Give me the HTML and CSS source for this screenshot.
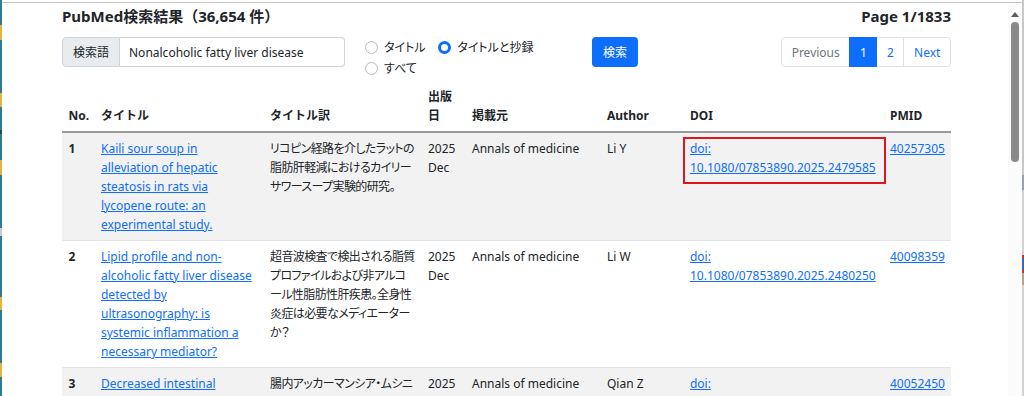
FILE: index.html
```html
<!DOCTYPE html>
<html lang="ja">
<head>
<meta charset="utf-8">
<title>PubMed検索結果</title>
<link rel="stylesheet" href="styles.css">
</head>
<body>
<div class="window">
  <div class="edge-left"></div>
  <div class="screen">
    <div class="topline"></div>
    <div class="viewport">
      <main class="page">
        <div class="head">
          <h1 class="title">PubMed検索結果（36,654 件）</h1>
          <div class="pageinfo">Page 1/1833</div>
        </div>
        <div class="toolbar">
          <form class="search">
            <div class="input-group">
              <span class="addon">検索語</span>
              <input class="field" type="text" value="Nonalcoholic fatty liver disease">
            </div>
            <div class="radios">
              <label class="check"><span class="radio"></span>タイトル</label>
              <label class="check"><span class="radio on"></span>タイトルと抄録</label>
              <label class="check all"><span class="radio"></span>すべて</label>
            </div>
            <button class="btn" type="button">検索</button>
          </form>
          <nav class="pager">
            <a class="disabled">Previous</a>
            <a class="active">1</a>
            <a>2</a>
            <a>Next</a>
          </nav>
        </div>
        <table class="results">
          <colgroup>
            <col class="c-no"><col class="c-title"><col class="c-trans"><col class="c-date"><col class="c-journal"><col class="c-author"><col class="c-doi"><col class="c-pmid">
          </colgroup>
          <thead>
            <tr><th>No.</th><th>タイトル</th><th>タイトル訳</th><th>出版日</th><th>掲載元</th><th>Author</th><th>DOI</th><th>PMID</th></tr>
          </thead>
          <tbody>
            <tr class="odd">
              <td class="num">1</td>
              <td><a href="#">Kaili sour soup in alleviation of hepatic steatosis in rats via lycopene route: an experimental study.</a></td>
              <td class="jp">リコピン経路を介したラットの脂肪肝軽減におけるカイリーサワースープ実験的研究。</td>
              <td>2025 Dec</td>
              <td>Annals of medicine</td>
              <td>Li Y</td>
              <td><span class="marked"><a href="#">doi: 10.1080/07853890.2025.2479585</a></span></td>
              <td><a href="#">40257305</a></td>
            </tr>
            <tr>
              <td class="num">2</td>
              <td><a href="#">Lipid profile and non-alcoholic fatty liver disease detected by ultrasonography: is systemic inflammation a necessary mediator?</a></td>
              <td class="jp">超音波検査で検出される脂質プロファイルおよび非アルコール性脂肪性肝疾患。全身性炎症は必要なメディエーターか？</td>
              <td>2025 Dec</td>
              <td>Annals of medicine</td>
              <td>Li W</td>
              <td><a href="#">doi: 10.1080/07853890.2025.2480250</a></td>
              <td><a href="#">40098359</a></td>
            </tr>
            <tr class="odd">
              <td class="num">3</td>
              <td><a href="#">Decreased intestinal Akkermansia muciniphila is associated with metabolic dysfunction.</a></td>
              <td class="jp">腸内アッカーマンシア・ムシニフィラの減少と代謝機能障害との関連。</td>
              <td>2025 Dec</td>
              <td>Annals of medicine</td>
              <td>Qian Z</td>
              <td><a href="#">doi: 10.1080/07853890.2025.2475163</a></td>
              <td><a href="#">40052450</a></td>
            </tr>
          </tbody>
        </table>
      </main>
      <div class="scrollbar">
        <span class="arrow"></span>
        <span class="thumb"></span>
      </div>
    </div>
  </div>
  <div class="edge-right"></div>
</div>
</body>
</html>
```
FILE: styles.css
```css
* { box-sizing: border-box; }

html, body {
  margin: 0;
  padding: 0;
  background: #fff;
}

body {
  font-family: "Noto Sans", "Noto Sans CJK JP", sans-serif;
  font-size: 12px;
  line-height: 19px;
  color: #212529;
}

.window {
  display: flex;
  height: 396px;
  overflow: hidden;
}

.edge-left {
  width: 2px;
  flex: none;
  background: linear-gradient(to bottom,
    #2e7b93 0 25px, #e2b33e 25px 40px,
    #2e7b93 40px 93px, #e2b33e 93px 107px,
    #2e7b93 107px 130px, #3a3f4a 130px 134px,
    #2e7b93 134px 160px, #e2b33e 160px 175px,
    #2e7b93 175px 228px, #c9ccd0 228px 236px,
    #2e7b93 236px 297px, #e2b33e 297px 310px,
    #2e7b93 310px 363px, #e2b33e 363px 377px,
    #2e7b93 377px 396px);
}

.edge-right {
  width: 2px;
  flex: none;
  background: linear-gradient(to bottom,
    #c8c8c8 0 175px, #9aa0a8 175px 190px,
    #d2d2d2 190px 255px, #c0392b 255px 258px,
    #3f66b5 258px 270px, #c0392b 270px 273px,
    #b9a58a 273px 285px, #d2d2d2 285px 396px);
}

.screen {
  flex: 1;
  min-width: 0;
  display: flex;
  flex-direction: column;
}

.topline {
  height: 3px;
  flex: none;
  background: #fff;
  border-bottom: 1px solid #c6c6c6;
}

.viewport {
  flex: 1;
  min-height: 0;
  display: flex;
}

.page {
  flex: 1;
  min-width: 0;
  padding: 4px 0 0 60px;
  overflow: hidden;
}

/* heading */
.head {
  width: 889px;
  display: flex;
  justify-content: space-between;
  align-items: baseline;
}

.title,
.pageinfo {
  margin: 0;
  font-size: 15px;
  line-height: 19px;
  font-weight: 700;
  color: #212529;
}

/* toolbar */
.toolbar {
  width: 889px;
  margin-top: 11px;
  display: flex;
  align-items: flex-start;
}

.search {
  display: flex;
  align-items: flex-start;
  margin: 0;
}

.input-group {
  display: flex;
  width: 283px;
  height: 30px;
}

.addon {
  width: 58px;
  display: flex;
  align-items: center;
  justify-content: center;
  background: #e9ecef;
  border: 1px solid #ced4da;
  border-radius: 4px 0 0 4px;
  color: #212529;
}

.field {
  flex: 1;
  min-width: 0;
  border: 1px solid #ced4da;
  border-left: 0;
  border-radius: 0 4px 4px 0;
  padding: 0 9px;
  font: inherit;
  color: #212529;
  background: #fff;
}

.radios {
  width: 227px;
  margin-left: 20px;
  display: flex;
  flex-wrap: wrap;
  font-feature-settings: "palt";
}

.check {
  display: flex;
  align-items: center;
  height: 21px;
  margin-right: 12.8px;
}

.check.all {
  flex-basis: 100%;
}

.radio {
  width: 13px;
  height: 13px;
  margin-right: 6px;
  border: 1px solid #b9bec4;
  border-radius: 50%;
  background: #fff;
  flex: none;
}

.radio.on {
  border: 3.5px solid #0d6efd;
}

.btn {
  width: 46px;
  height: 30px;
  padding: 0;
  border: 0;
  border-radius: 4px;
  background: #0d6efd;
  color: #fff;
  font: inherit;
}

.pager {
  margin-left: auto;
  display: flex;
  height: 30px;
}

.pager a {
  display: flex;
  align-items: center;
  padding: 0 9.6px;
  border: 1px solid #dee2e6;
  margin-left: -1px;
  color: #0d6efd;
  text-decoration: none;
  background: #fff;
}

.pager a:first-child {
  margin-left: 0;
  border-radius: 4px 0 0 4px;
}

.pager a:last-child {
  border-radius: 0 4px 4px 0;
}

.pager a.disabled {
  color: #6c757d;
}

.pager a.active {
  background: #0d6efd;
  border-color: #0d6efd;
  color: #fff;
  position: relative;
}

/* table */
.results {
  width: 889px;
  margin-top: 3px;
  border-collapse: collapse;
  table-layout: fixed;
}

.c-no { width: 32.6px; }
.c-title { width: 169px; }
.c-trans { width: 158px; }
.c-date { width: 44px; }
.c-journal { width: 135px; }
.c-author { width: 83px; }
.c-doi { width: 200px; }
.c-pmid { width: 67.4px; }

.results th,
.results td {
  padding: 6px 6.4px;
  text-align: left;
  vertical-align: top;
  border-bottom: 1px solid #e3e6e9;
}

.results thead th {
  vertical-align: bottom;
  font-weight: 700;
  padding-top: 5px;
  border-bottom: 2px solid #9a9a9a;
}

.results tbody td {
  font-feature-settings: "palt";
}

.results tbody td.jp {
  letter-spacing: -0.6px;
}

.results tbody tr.odd td {
  background: #f2f2f2;
}

.results td.num {
  font-weight: 700;
}

.results a {
  color: #0d6efd;
  text-decoration: underline;
}

.marked {
  display: inline-block;
  position: relative;
}

.marked::after {
  content: "";
  position: absolute;
  top: -2px;
  right: -9px;
  bottom: -7px;
  left: -7px;
  border: 2px solid #e0161c;
  pointer-events: none;
}

/* scrollbar */
.scrollbar {
  width: 14px;
  flex: none;
  background: #fbfbfb;
  display: flex;
  flex-direction: column;
  align-items: center;
}

.arrow {
  margin-top: 9px;
  width: 0;
  height: 0;
  border-left: 4px solid transparent;
  border-right: 4px solid transparent;
  border-bottom: 5px solid #5f5f5f;
}

.thumb {
  margin-top: 5px;
  width: 8px;
  height: 140px;
  border-radius: 4px;
  background: #8a8a8a;
}
```
